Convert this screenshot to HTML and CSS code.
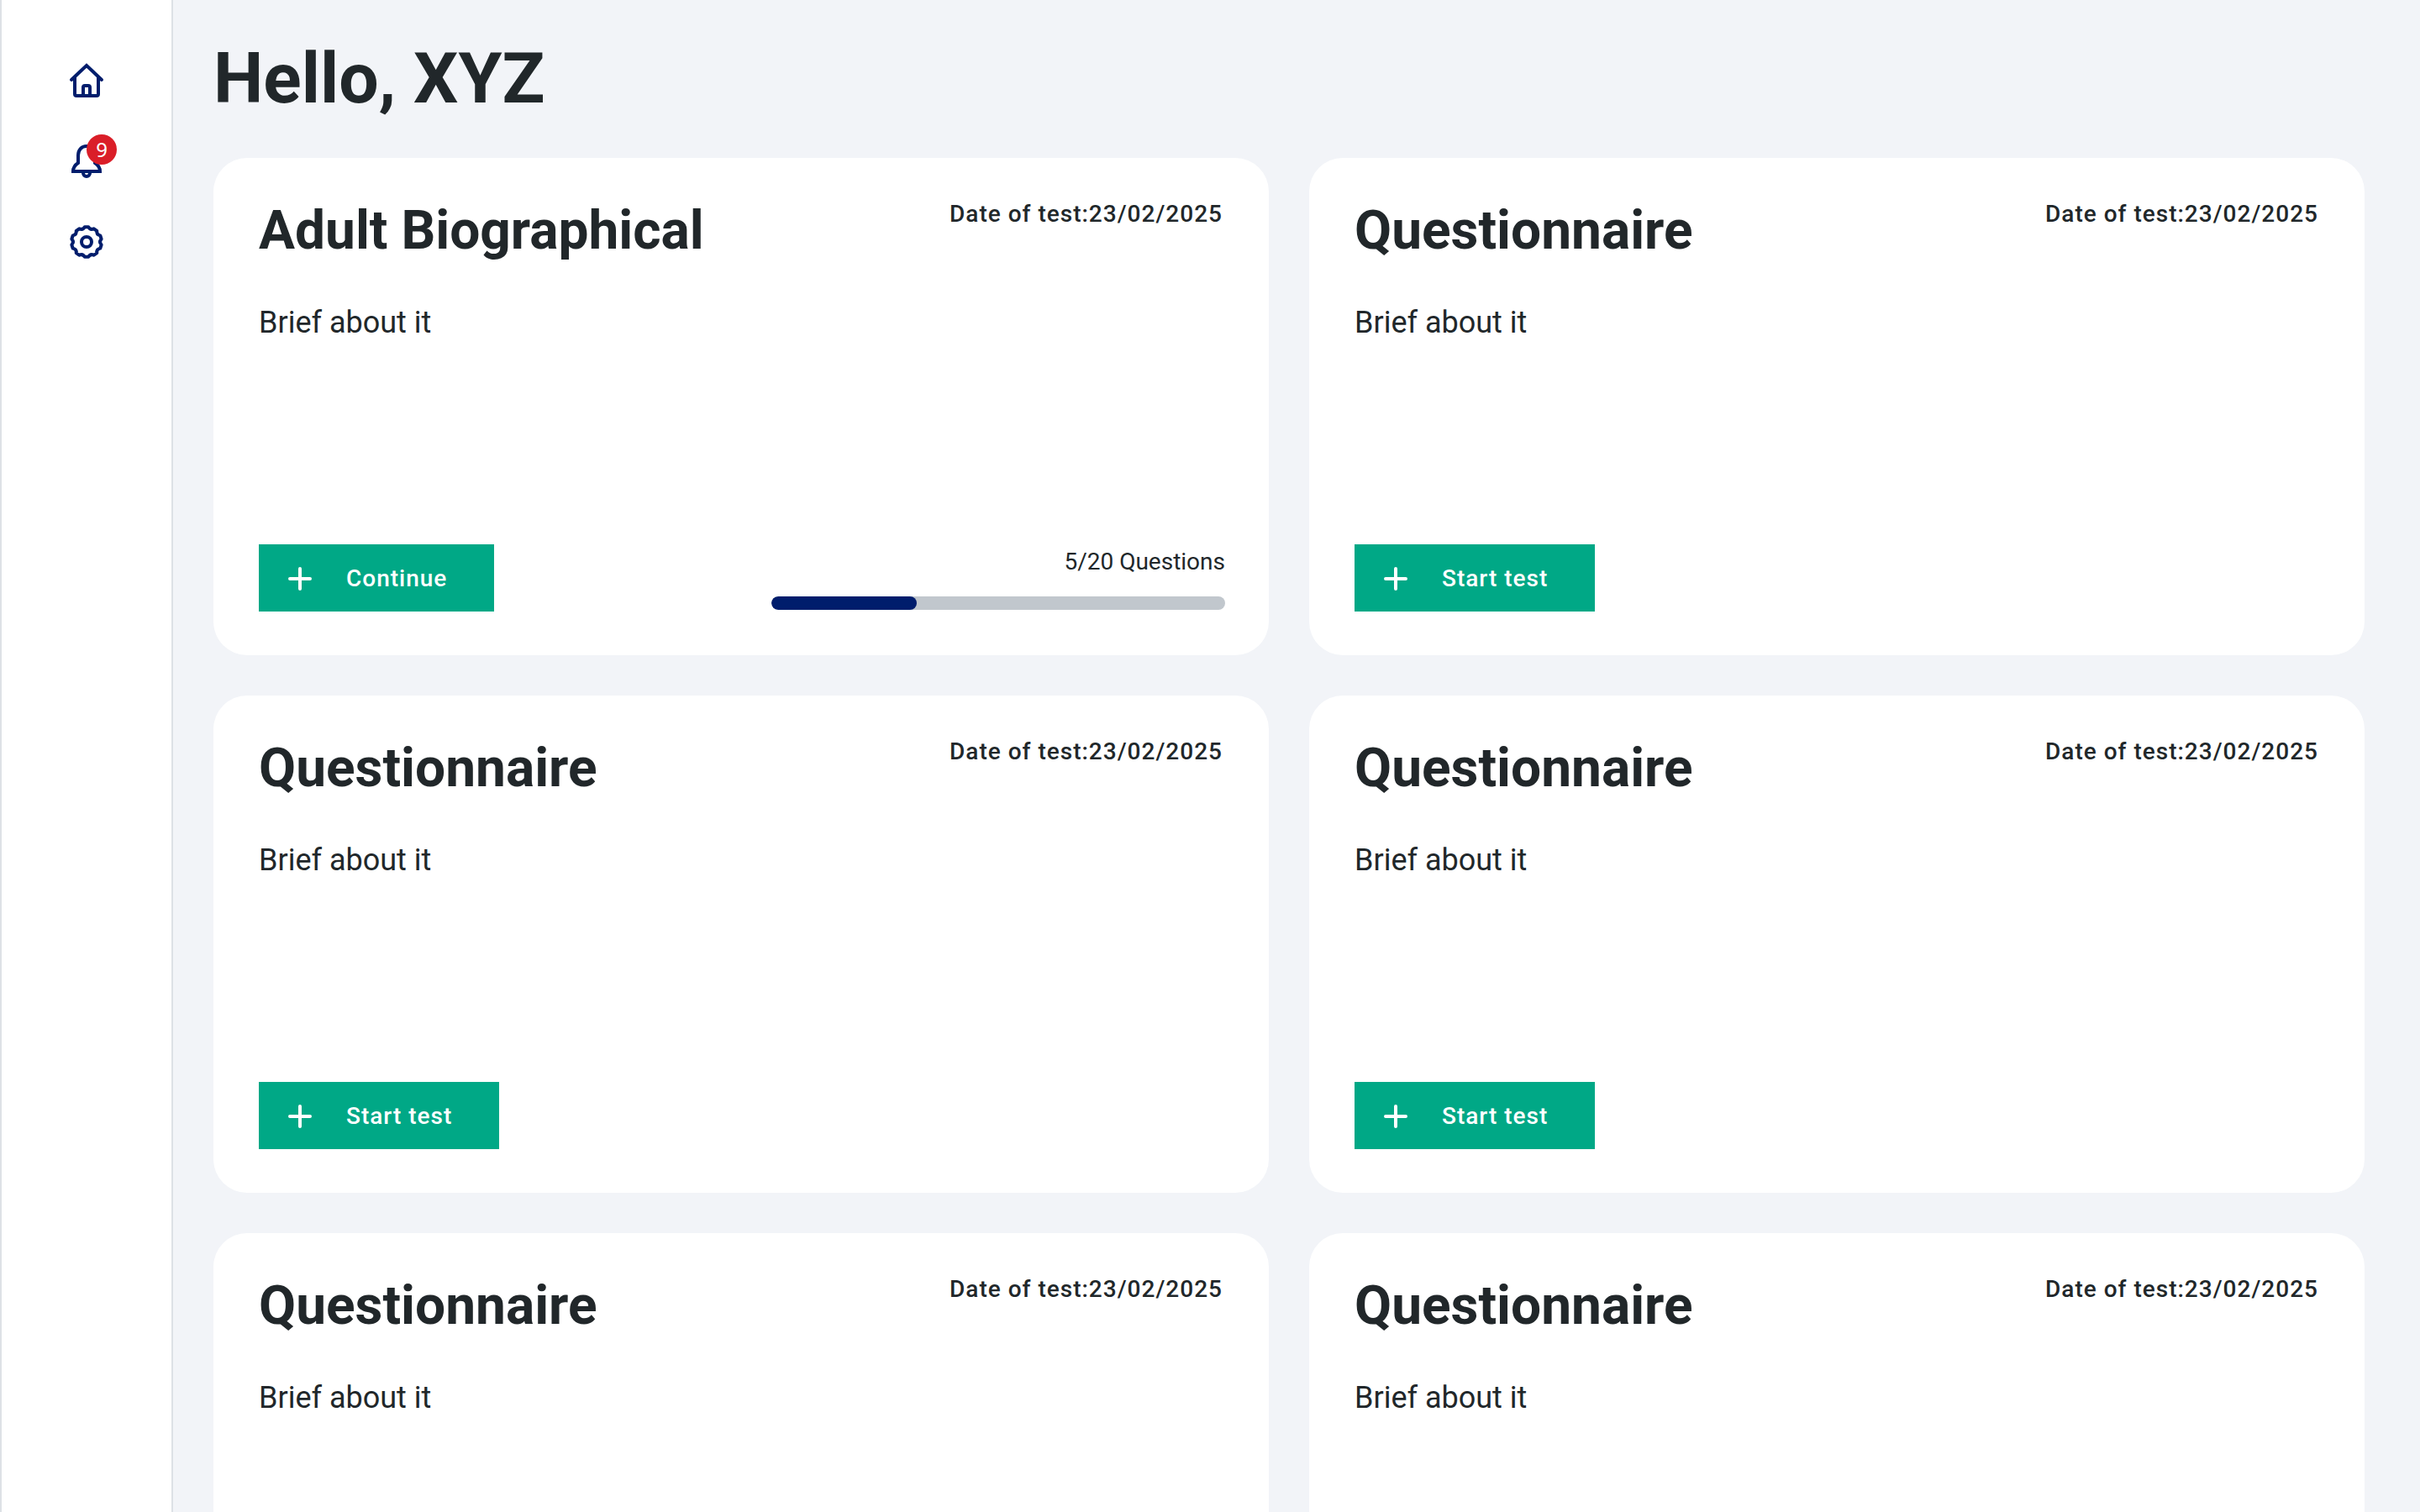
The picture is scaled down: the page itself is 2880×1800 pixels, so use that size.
FILE: index.html
```html
<!DOCTYPE html>
<html lang="en">
<head>
<meta charset="utf-8">
<meta name="viewport" content="width=device-width, initial-scale=1">
<title>Dashboard</title>
<link rel="stylesheet" href="styles.css">
</head>
<body>
<svg class="sprite" aria-hidden="true">
  <symbol id="plus" viewBox="0 0 32 32"><path d="M16 4v24M4 16h24" fill="none" stroke="currentColor" stroke-width="4" stroke-linecap="round"/></symbol>
</svg>
<div class="shell">
  <nav class="sidebar" aria-label="Main">
    <a class="nav-link" href="#home" aria-label="Home">
      <svg class="nav-icon" viewBox="0 0 24 24"><path stroke-linecap="round" d="M3 11.500 12 3l9 8.500"/><path d="M5 10v10a1 1 0 0 0 1 1h12a1 1 0 0 0 1-1V10M10 21v-5a1 1 0 0 1 1-1h2a1 1 0 0 1 1 1v5"/></svg>
    </a>
    <a class="nav-link" href="#notifications" aria-label="Notifications">
      <svg class="nav-icon" viewBox="0 0 24 24"><path d="M4 18h16c0-2-1-3.700-3-5V8.500C17 5.300 15 3 12 3S7 5.300 7 8.500V13c-2 1.300-3 3-3 5zM10 19a2 2 0 0 0 4 0"/></svg>
      <span class="badge">9</span>
    </a>
    <a class="nav-link" href="#settings" aria-label="Settings">
      <svg class="nav-icon" viewBox="0 0 24 24"><circle cx="12" cy="12" r="3"/><path stroke-linejoin="round" d="M10.900 3.070H13.100Q14.220 5.150 16.360 4.130L18.140 5.420Q17.820 7.770 20.160 8.200L20.830 10.280Q19.200 12 20.830 13.720L20.160 15.800Q17.820 16.230 18.140 18.580L16.360 19.870Q14.220 18.850 13.100 20.930H10.900Q9.780 18.850 7.640 19.870L5.860 18.580Q6.180 16.230 3.840 15.800L3.170 13.720Q4.800 12 3.170 10.280L3.840 8.200Q6.180 7.770 5.860 5.420L7.640 4.130Q9.780 5.150 10.900 3.070Z"/></svg>
    </a>
  </nav>
  <main class="main">
    <h1 class="greeting">Hello, XYZ</h1>
    <div class="cards">
      <article class="card">
        <header class="card-head"><h2 class="card-title">Adult Biographical</h2><span class="card-date">Date of test:23/02/2025</span></header>
        <p class="card-text">Brief about it</p>
        <footer class="card-foot">
          <button class="btn" type="button"><svg class="btn-icon" aria-hidden="true"><use href="#plus"/></svg>Continue</button>
          <div class="progress">
            <span class="progress-label" id="progress-label">5/20 Questions</span>
            <div class="progress-track" role="progressbar" aria-labelledby="progress-label" aria-valuemin="0" aria-valuemax="20" aria-valuenow="5"><div class="progress-fill" style="width:32%"></div></div>
          </div>
        </footer>
      </article>
      <article class="card">
        <header class="card-head"><h2 class="card-title">Questionnaire</h2><span class="card-date">Date of test:23/02/2025</span></header>
        <p class="card-text">Brief about it</p>
        <footer class="card-foot"><button class="btn" type="button"><svg class="btn-icon" aria-hidden="true"><use href="#plus"/></svg>Start test</button></footer>
      </article>
      <article class="card">
        <header class="card-head"><h2 class="card-title">Questionnaire</h2><span class="card-date">Date of test:23/02/2025</span></header>
        <p class="card-text">Brief about it</p>
        <footer class="card-foot"><button class="btn" type="button"><svg class="btn-icon" aria-hidden="true"><use href="#plus"/></svg>Start test</button></footer>
      </article>
      <article class="card">
        <header class="card-head"><h2 class="card-title">Questionnaire</h2><span class="card-date">Date of test:23/02/2025</span></header>
        <p class="card-text">Brief about it</p>
        <footer class="card-foot"><button class="btn" type="button"><svg class="btn-icon" aria-hidden="true"><use href="#plus"/></svg>Start test</button></footer>
      </article>
      <article class="card">
        <header class="card-head"><h2 class="card-title">Questionnaire</h2><span class="card-date">Date of test:23/02/2025</span></header>
        <p class="card-text">Brief about it</p>
      </article>
      <article class="card">
        <header class="card-head"><h2 class="card-title">Questionnaire</h2><span class="card-date">Date of test:23/02/2025</span></header>
        <p class="card-text">Brief about it</p>
      </article>
    </div>
  </main>
</div>
</body>
</html>
```
FILE: styles.css
```css
* {
  box-sizing: border-box;
}

body {
  margin: 0;
  background: #f2f4f8;
  color: #21272a;
  font-family: Roboto, "Liberation Sans", sans-serif;
}

.sprite {
  display: none;
}

.shell {
  display: flex;
  height: 100vh;
}

.sidebar {
  display: flex;
  flex: none;
  flex-direction: column;
  align-items: center;
  gap: 48px;
  width: 206px;
  padding-top: 72px;
  background: #fff;
  border: solid #dde1e6;
  border-width: 0 2px;
}

.nav-link {
  position: relative;
  width: 48px;
  height: 48px;
  color: #001d6c;
}

.nav-icon {
  display: block;
  width: 48px;
  height: 48px;
  fill: none;
  stroke: currentColor;
  stroke-width: 2;
}

.badge {
  position: absolute;
  top: -8px;
  left: 24px;
  width: 36px;
  height: 36px;
  border-radius: 50%;
  background: #da1e28;
  color: #fff;
  font: 24px/36px "Noto Sans", sans-serif;
  text-align: center;
}

.main {
  flex: 1;
  min-width: 0;
  padding: 44px 66px 48px 48px;
  overflow-y: auto;
  scrollbar-width: none;
}

.greeting {
  margin: 0 0 44px;
  font-size: 84px;
  line-height: 100px;
  font-weight: 700;
}

.cards {
  display: grid;
  grid-template-columns: repeat(2, minmax(0, 1fr));
  gap: 48px;
}

.card {
  display: flex;
  flex-direction: column;
  min-height: 592px;
  padding: 49px 52px 52px 54px;
  border-radius: 40px;
  background: #fff;
}

.card-head {
  display: flex;
  justify-content: space-between;
  align-items: flex-start;
}

.card-title {
  margin: 0;
  font-size: 64px;
  line-height: 76px;
  font-weight: 700;
}

.card-date {
  padding-right: 3px;
  font-size: 28px;
  line-height: 36px;
  font-weight: 500;
  letter-spacing: 1px;
}

.card-text {
  margin: 44px 0 0;
  font-size: 36px;
  line-height: 54px;
}

.card-foot {
  display: flex;
  justify-content: space-between;
  align-items: flex-end;
  margin-top: auto;
}

.btn {
  display: flex;
  align-items: center;
  gap: 39px;
  height: 80px;
  padding: 1px 56px 0 33px;
  border: 0;
  background: #00a886;
  color: #fff;
  font: 500 28px/36px Roboto, "Liberation Sans", sans-serif;
  letter-spacing: 1px;
  cursor: pointer;
}

.btn-icon {
  width: 32px;
  height: 32px;
}

.progress {
  display: flex;
  flex-direction: column;
  gap: 20px;
  width: 540px;
  padding-bottom: 2px;
}

.progress-label {
  font-size: 28px;
  line-height: 42px;
  text-align: right;
}

.progress-track {
  height: 16px;
  border-radius: 8px;
  background: #c1c7cd;
  overflow: hidden;
}

.progress-fill {
  height: 100%;
  border-radius: 8px;
  background: #001d6c;
}
```
